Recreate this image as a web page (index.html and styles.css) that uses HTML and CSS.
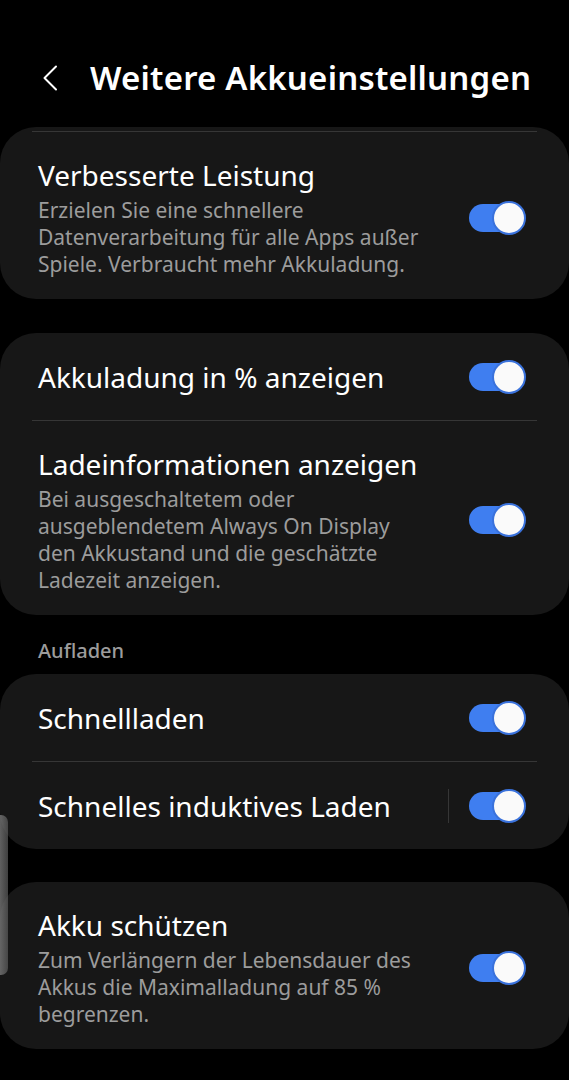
FILE: index.html
```html
<!DOCTYPE html>
<html lang="de">
<head>
    <meta charset="UTF-8">
    <meta name="viewport" content="width=device-width, initial-scale=1.0">
    <title>Weitere Akkueinstellungen</title>
    <link rel="stylesheet" href="styles.css">
</head>
<body>
    <div class="header">
        <svg class="back" width="16" height="26" viewBox="0 0 16 26">
            <polyline points="14,1.5 2.5,13 14,24.5" fill="none" stroke="#fff" stroke-width="2" stroke-linecap="round" stroke-linejoin="round"/>
        </svg>
        <h1>Weitere Akkueinstellungen</h1>
    </div>

    <div class="card card-top">
        <div class="row">
            <div class="text">
                <div class="title">Verbesserte Leistung</div>
                <div class="desc">Erzielen Sie eine schnellere Datenverarbeitung für alle Apps außer Spiele. Verbraucht mehr Akkuladung.</div>
            </div>
            <span class="switch"></span>
        </div>
    </div>

    <div class="card">
        <div class="row single">
            <div class="text">
                <div class="title">Akkuladung in % anzeigen</div>
            </div>
            <span class="switch"></span>
        </div>
        <div class="row">
            <div class="text">
                <div class="title">Ladeinformationen anzeigen</div>
                <div class="desc">Bei ausgeschaltetem oder ausgeblendetem Always On Display den Akkustand und die geschätzte Ladezeit anzeigen.</div>
            </div>
            <span class="switch"></span>
        </div>
    </div>

    <div class="section">Aufladen</div>

    <div class="card card-charge">
        <div class="row single">
            <div class="text">
                <div class="title">Schnellladen</div>
            </div>
            <span class="switch"></span>
        </div>
        <div class="row single">
            <div class="text">
                <div class="title">Schnelles induktives Laden</div>
            </div>
            <span class="vline"></span>
            <span class="switch"></span>
        </div>
    </div>

    <div class="card">
        <div class="row">
            <div class="text">
                <div class="title">Akku schützen</div>
                <div class="desc">Zum Verlängern der Lebensdauer des Akkus die Maximalladung auf 85 % begrenzen.</div>
            </div>
            <span class="switch"></span>
        </div>
    </div>

    <div class="edge-handle"></div>
</body>
</html>
```

FILE: styles.css
```css
body {
    margin: 0;
    background-color: #000;
    color: #fff;
    font-family: "Noto Sans", "Open Sans", sans-serif;
    position: relative;
    min-height: 1080px;
}

.header {
    height: 127px;
    box-sizing: border-box;
    padding: 28px 0 0 42px;
    display: flex;
    align-items: center;
}

.back {
    flex: none;
    margin-right: 32px;
}

h1 {
    margin: 0;
    font-size: 33px;
    font-weight: 600;
    letter-spacing: 0.2px;
    white-space: nowrap;
}

.card {
    background-color: #171717;
    border-radius: 36px;
    margin-bottom: 34px;
    overflow: hidden;
}

.card-top {
    padding-top: 4px;
}

.card-charge {
    margin-bottom: 33px;
}

.row {
    display: flex;
    align-items: center;
    padding: 25px 11px 21px 6px;
    margin: 0 32px;
    border-top: 1px solid #363636;
}

.card > .row:first-child {
    border-top: none;
}

.card-top > .row:first-child {
    border-top: 1px solid #363636;
}

.row.single {
    padding-top: 26px;
    padding-bottom: 25px;
}

.text {
    flex: 1;
    min-width: 0;
}

.title {
    font-size: 28px;
    line-height: 36px;
}

.desc {
    font-size: 21px;
    line-height: 27px;
    color: #9c9c9c;
    margin-top: 4px;
    max-width: 392px;
}

.vline {
    width: 1px;
    height: 34px;
    background-color: #363636;
    margin-right: 20px;
    flex: none;
}

.switch {
    flex: none;
    position: relative;
    width: 57px;
    height: 34px;
}

.switch::before {
    content: "";
    position: absolute;
    left: 0;
    top: 3px;
    width: 54px;
    height: 28px;
    border-radius: 14px;
    background-color: #3f7ef0;
}

.switch::after {
    content: "";
    position: absolute;
    right: 0;
    top: 0;
    width: 30px;
    height: 30px;
    border-radius: 50%;
    background-color: #fafafa;
    border: 2px solid #3a72dc;
}

.section {
    font-size: 20px;
    font-weight: 500;
    color: #9c9c9c;
    padding-left: 38px;
    line-height: 24px;
    margin-top: -10px;
    margin-bottom: 11px;
}

.edge-handle {
    position: absolute;
    left: -6px;
    top: 815px;
    width: 14px;
    height: 160px;
    border-radius: 8px;
    background: linear-gradient(to right, rgba(150, 150, 150, 0.8), rgba(90, 90, 90, 0.7));
}
```
